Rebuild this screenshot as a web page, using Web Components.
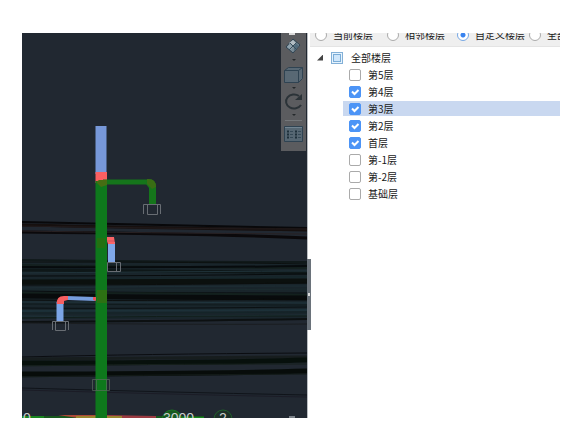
<!DOCTYPE html>
<html lang="zh-CN">
<head>
<meta charset="utf-8">
<title>楼层显示</title>
<style>
html, body { margin: 0; background: #fff; }
body { box-sizing: border-box; height: 100vh; padding: 33px 8px 19px 22px; display: flex; font: 10px/17px "Noto Sans CJK SC", sans-serif; color: #181818; }
</style>
</head>
<body>
<floor-app></floor-app>
<script>
const define = (name, html, setup) => customElements.define(name, class extends HTMLElement {
  connectedCallback() {
    if (this.shadowRoot) return;
    const root = this.attachShadow({ mode: "open" });
    const t = document.createElement("template");
    t.innerHTML = html;
    root.append(t.content.cloneNode(true));
    if (setup) setup(this, root);
  }
});

/* Pipe model: [left y, right y, width, colour] for each distant line */
const strands = [
  [222, 228, 2, "#08080a"], [225, 230, 3, "#16100f"], [226, 229, 1, "#221b1c"], [232, 238, 3, "#0b090b"], [231, 234, 1, "#282123"],
  [260, 262, 2, "#10191a"], [262, 264, 1, "#0c1110"], [265, 268, 2, "#14201f"], [267, 266, 2, "#070b0d"], [270, 273, 3, "#0e1718"],
  [273, 271, 1, "#20333a"], [276, 274, 1, "#080c0d"], [280, 277, 2, "#16262a"], [282, 281, 5, "#0b100e"], [285, 283, 1, "#0b0e0d"],
  [288, 286, 1, "#1e2f36"], [290, 289, 1, "#1b2b2e"], [291, 293, 1, "#0a0e10"], [293, 295, 2, "#13201d"], [296, 298, 5, "#080b0c"],
  [300, 299, 1, "#0a0c0b"], [302, 303, 1, "#20353d"], [304, 305, 1, "#101b1d"], [308, 307, 1, "#0b1113"], [311, 310, 2, "#1c3038"],
  [313, 312, 1, "#142428"], [316, 315, 1, "#20343b"], [318, 316, 1, "#101d19"], [322, 319, 2, "#0c1011"], [323, 324, 1, "#1a1d20"],
  [357, 353, 1, "#0b0d11"], [359, 357, 3, "#171d1e"], [363, 360, 5, "#07100c"], [366, 364, 1, "#16201c"], [373, 370, 1, "#19241f"],
  [374, 371, 5, "#070c0a"], [377, 374, 1, "#131b18"], [388, 395, 1, "#10141a"], [390, 397, 1, "#1b1c26"]
];

define("model-view", `
<style>
:host { display: block; position: relative; min-width: 0; background: #212831; overflow: hidden; }
svg { display: block; width: 100%; height: 100%; }
text { font: 14px "Liberation Sans", sans-serif; fill: #c8cccb; }
::slotted(*) { position: absolute; top: 0; right: 1px; }
</style>
<svg viewBox="22 33 285 385" preserveAspectRatio="xMidYMid slice" role="img" aria-label="管道三维模型">
  <rect x="22" y="262" width="285" height="57" fill="#19252b"/>
  <g id="strands" fill="none"></g>
  <path d="M22 417H307" stroke="#17581d" stroke-width="2" stroke-dasharray="182 200"/>
  <path d="M58 415L98 415V418H78Z" fill="#ad4937"/><path d="M76 416H96V418H76Z" fill="#9b852f"/>
  <path d="M107 415L156 416V418H107Z" fill="#9b3b42"/><path d="M107 416H122V418H107Z" fill="#9b852f"/>
  <path d="M95.500 126H106.500V174H95.500Z" fill="#7798d9"/>
  <path d="M95.500 172H107V183H95.500Z" fill="#fb5f61"/>
  <path d="M103 182H147Q152 182 152 188V205" fill="none" stroke="#15751b" stroke-width="5"/>
  <path d="M148 179Q156 179 156 187V205H149V188L146 184Z" fill="#15751b"/><path d="M147 179Q156 178 156 187L152 189L147 184Z" fill="#396d14"/>
  <rect x="95.500" y="181" width="11.500" height="237" fill="#0e781c"/>
  <path d="M96 182L99 180H107V185L101 187Z" fill="#466d13"/>
  <rect x="97" y="238" width="8" height="10" fill="#247012"/><rect x="97" y="290" width="10" height="13" fill="#2d7013"/>
  <path d="M108 242H115V262H108Z" fill="#80a8e9"/><path d="M107 237H114L115 244H108L107 241Z" fill="#fb6466"/><path d="M107 241H114" stroke="#cf5261"/>
  <path d="M66 298L95 299" stroke="#769ddd" stroke-width="4"/><path d="M60 302V321" stroke="#7ba5e7" stroke-width="7"/>
  <path d="M57 304Q56 296 64 296H68V300L64 301V304Z" fill="#f85f61"/><path d="M93 297L96 297V301L93 300Z" fill="#ec5357"/>
  <g fill="none" stroke="#686d73">
    <path d="M143.500 214V204.500H160.500V214M147.500 204V214.500H157.500V204"/>
    <path d="M107.500 262.500H120.500V271.500H107.500ZM116.500 262V271"/>
    <path d="M52.500 330V321.500H68.500V330M55.500 321V330.500H65.500V321"/>
  </g>
  <path d="M92.500 379.500H109.500V390.500H92.500ZM96.500 380V390M106.500 380V390" fill="none" stroke="#5f6d62" opacity=".65"/>
  <path d="M22 417H44M162 418H204" stroke="#18851f" stroke-width="2"/>
  <circle cx="172" cy="420" r="10" fill="#17591f" stroke="#1a7422"/>
  <circle cx="223" cy="419" r="9" fill="#1e3029" stroke="#20612a"/>
  <text x="23" y="423">0</text><text x="163" y="423">3000</text><text x="219" y="423">2</text>
  <path d="M289 417H295" stroke="#7b8289" stroke-width="2"/>
</svg>
<slot></slot>`, (host, root) => {
  const g = root.getElementById("strands");
  strands.forEach(([a, b, w, c], i) => {
    const p = document.createElementNS("http://www.w3.org/2000/svg", "path");
    p.setAttribute("d", `M22 ${a}Q${110 + i * 37 % 120} ${Math.round((a + b) / 2) + (i % 3 - 1)} 307 ${b}`);
    p.setAttribute("stroke", c);
    p.setAttribute("stroke-width", w);
    g.append(p);
  });
});

define("view-tools", `
<style>
:host { display: flex; flex-direction: column; align-items: center; box-sizing: border-box; width: 25px; height: 118px; background: #5b5c5f; overflow: hidden; }
button { display: block; flex: none; width: 25px; height: 28px; padding: 0; border: 0; background: none; }
svg { display: block; width: 25px; height: 28px; fill: none; stroke: #2f4352; }
hr { flex: none; width: 17px; margin: 3px 0 0; border: 0; border-top: 1px solid #74777a; }
</style>
<button aria-label="视图方向"><svg viewBox="0 0 25 28"><path d="M8 0H14V2H8Z" fill="#dadada" stroke="none"/><path d="M12 6L19 12L12 20L5 14Z" fill="#788a95"/><path d="M12 7L15 10L12 13L8 10Z" fill="#b1bdc4" stroke="none"/><path d="M6 14L9 11L12 14L10 17Z" fill="#8fa2ad" stroke="none"/><path d="M15 10L18 13L13 18V13Z" fill="#506b7c" stroke="none"/><path d="M9 10L16 17M16 9L8 17" stroke="#384f5d"/><path d="M11 26H15L13 28Z" fill="#24282b" stroke="none"/></svg></button>
<button aria-label="立体显示"><svg viewBox="0 0 25 28"><path d="M3.500 9.500L7.500 6.500H21.500V17.500L17.500 21.500H3.500Z" fill="#586874"/><path d="M3.500 9.500H17.500V21.500M17.500 9.500L21.500 6.500"/><path d="M11 26H15L13 28Z" fill="#24282b" stroke="none"/></svg></button>
<button aria-label="旋转"><svg viewBox="0 0 25 28"><path d="M18 7A8 7 0 1 0 20 16" stroke="#2b3338" stroke-width="2"/><path d="M21 5V11H14Z" fill="#2b3338" stroke="none"/><path d="M11 25H15L13 27Z" fill="#24282b" stroke="none"/></svg></button>
<hr>
<button aria-label="显示列表"><svg viewBox="0 0 25 28"><path d="M3.500 5.500H21.500V20.500H3.500Z" fill="#566773"/><path d="M4 6.500H21" stroke="#718491"/><path d="M6 10.500H8M6 13.500H8M6 16.500H8M14 10.500H16M14 13.500H16M14 16.500H16" stroke="#1e303b" stroke-width="2"/><path d="M9 10.500H12M9 13.500H12M9 16.500H12M17 10.500H20M17 13.500H20M17 16.500H20" stroke="#354956"/></svg></button>`);

define("floor-mode", `
<style>
:host { display: block; white-space: nowrap; }
label { display: flex; align-items: center; gap: 6px; line-height: 12px; }
input { appearance: none; flex: none; box-sizing: border-box; width: 12px; height: 12px; margin: 0; border: 1px solid #aaa; border-radius: 50%; background: #fff; }
input:checked { border-color: #77a8e5; background: radial-gradient(circle, #3883ef 0 2px, #fff 3px); }
</style>
<label><input type="radio"><span><slot></slot></span></label>`, (host, root) => {
  root.querySelector("input").checked = host.hasAttribute("checked");
});

define("floor-row", `
<style>
:host { display: block; padding: 1px 0 1px 33px; }
label { display: flex; align-items: center; height: 15px; padding-left: 6px; gap: 7px; }
:host([selected]) label { background: #c9d8f0; }
input { appearance: none; flex: none; box-sizing: border-box; width: 12px; height: 12px; margin: 0; border: 1px solid #aaa; border-radius: 2px; background: #fff; }
input:checked { border-color: #4c94f6; background: #4c94f6; }
.box { display: grid; }
.box > * { grid-area: 1 / 1; }
svg { width: 12px; height: 12px; fill: none; stroke: #fff; stroke-width: 2; visibility: hidden; pointer-events: none; z-index: 1; }
input:checked + svg { visibility: visible; }
</style>
<label><span class="box"><input type="checkbox"><svg viewBox="0 0 12 12"><path d="M3 5.500L5.500 8L9.500 4"/></svg></span><span><slot></slot></span></label>`, (host, root) => {
  root.querySelector("input").checked = host.hasAttribute("checked");
});

define("floor-panel", `
<style>
:host { display: block; min-width: 0; overflow: hidden; background: #fff; }
header { display: grid; grid-template-columns: 72px 70px 72px auto; align-content: end; height: 14px; box-sizing: border-box; padding: 0 0 5px 5px; overflow: hidden; background: #efefef; border-bottom: 1px solid #e4e4e4; }
.tree { padding-top: 2px; }
.parent { display: flex; align-items: center; height: 17px; padding-left: 7px; }
.fold { width: 6px; height: 6px; padding: 0; border: 0; background: #444; clip-path: polygon(100% 0, 100% 100%, 0 100%); margin-right: 8px; }
label { display: flex; align-items: center; gap: 8px; }
input { appearance: none; box-sizing: border-box; width: 12px; height: 12px; margin: 0; border: 1px solid #83b0d7; background: #cfe6fa; box-shadow: inset 0 0 0 1px #e6f3fd, inset 0 0 0 2px #7badd7; }
</style>
<header role="radiogroup"><slot name="mode"></slot></header>
<div class="tree"><div class="parent"><button class="fold" aria-label="折叠"></button><label><input type="checkbox"><span>全部楼层</span></label></div><slot></slot></div>`);

define("floor-app", `
<style>
:host { display: grid; flex: 1; min-width: 0; grid-template-columns: minmax(0, 285fr) 3px minmax(0, 250fr); }
.rail { display: flex; flex-direction: column; box-sizing: border-box; padding-top: 226px; border-left: 1px solid #b9bdc1; z-index: 1; }
button { position: relative; width: 4px; height: 71px; margin: 0 0 0 -1px; padding: 0; border: 0; background: #6a727a; flex: none; }
button::after { content: ""; position: absolute; left: 1px; top: 34px; width: 2px; height: 3px; background: #ddd; }
</style>
<model-view><view-tools></view-tools></model-view>
<div class="rail"><button aria-label="收起面板"></button></div>
<floor-panel>
  <floor-mode slot="mode">当前楼层</floor-mode><floor-mode slot="mode">相邻楼层</floor-mode><floor-mode slot="mode" checked>自定义楼层</floor-mode><floor-mode slot="mode">全部</floor-mode>
  <floor-row>第5层</floor-row><floor-row checked>第4层</floor-row><floor-row checked selected>第3层</floor-row><floor-row checked>第2层</floor-row><floor-row checked>首层</floor-row><floor-row>第-1层</floor-row><floor-row>第-2层</floor-row><floor-row>基础层</floor-row>
</floor-panel>`);
</script>
</body>
</html>
